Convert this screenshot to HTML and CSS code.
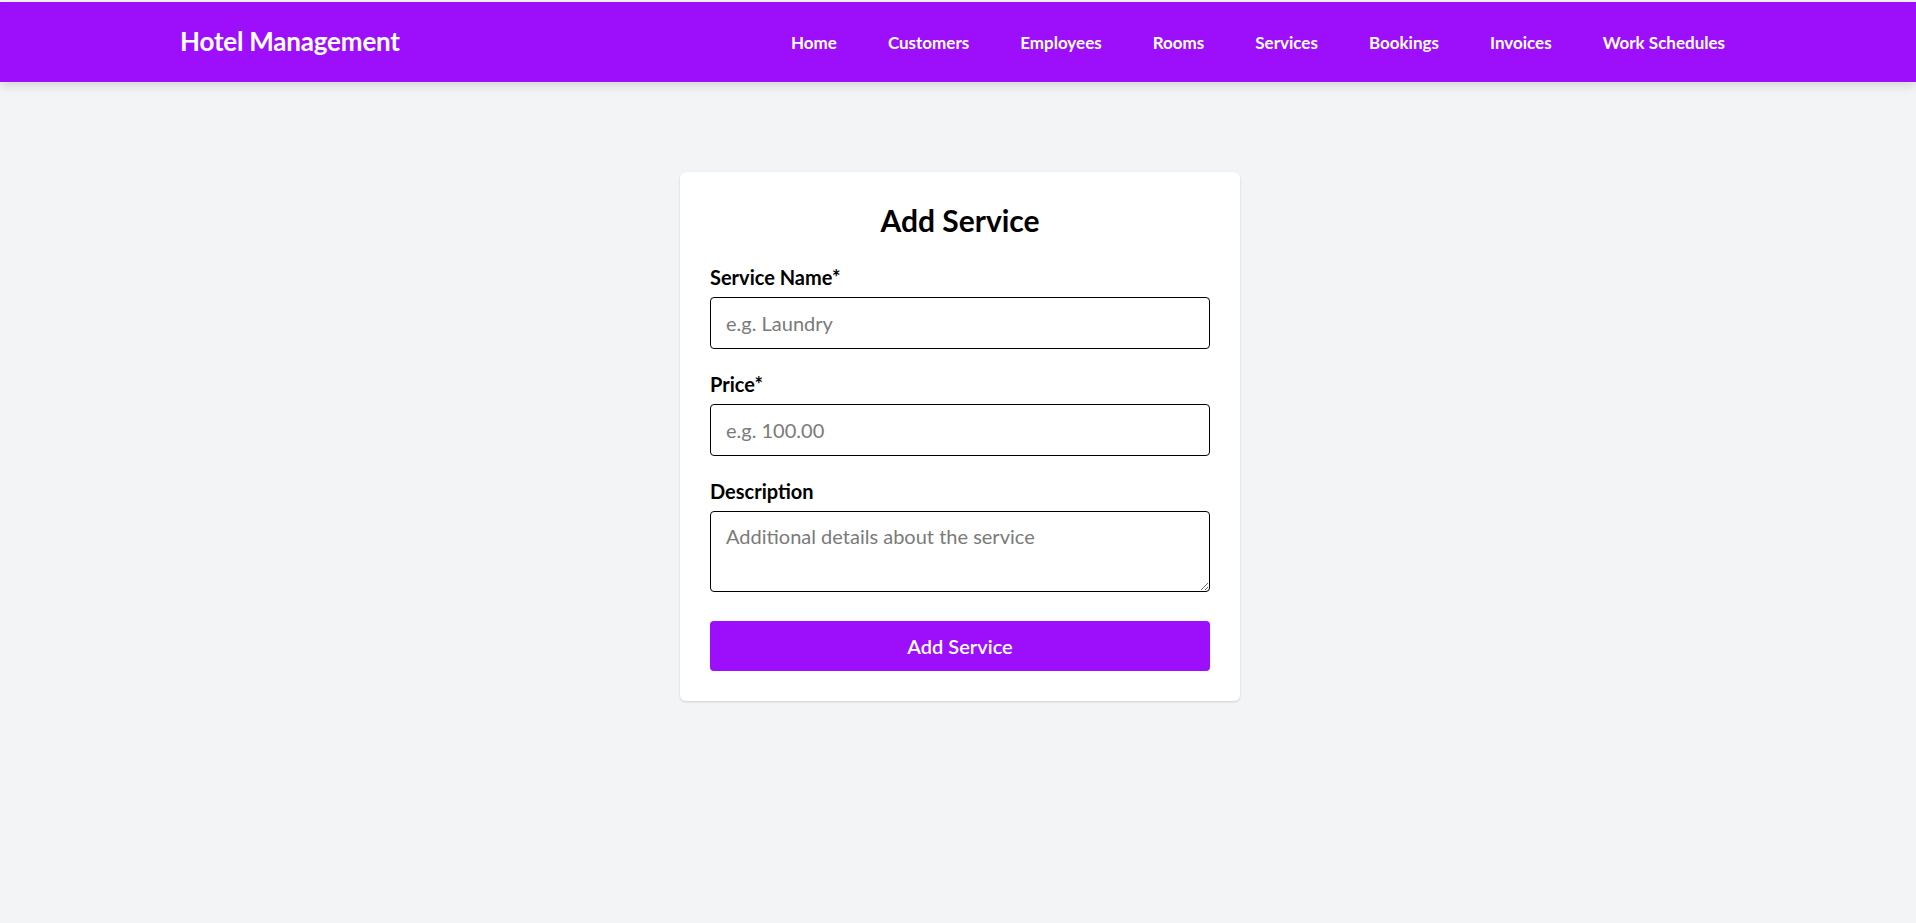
FILE: index.html
```html
<!DOCTYPE html>
<html lang="en">
<head>
<meta charset="utf-8">
<title>Add Service</title>
<link rel="stylesheet" href="styles.css">
</head>
<body>
<div class="page">
  <nav class="navbar">
    <div class="nav-inner">
      <a class="brand" href="#">Hotel Management</a>
      <ul class="nav-links">
        <li><a href="#">Home</a></li>
        <li><a href="#">Customers</a></li>
        <li><a href="#">Employees</a></li>
        <li><a href="#">Rooms</a></li>
        <li><a href="#">Services</a></li>
        <li><a href="#">Bookings</a></li>
        <li><a href="#">Invoices</a></li>
        <li><a href="#">Work Schedules</a></li>
      </ul>
    </div>
  </nav>
  <main class="main">
    <form class="card">
      <h1 class="title">Add Service</h1>
      <div class="field">
        <label class="label" for="name">Service Name*</label>
        <input class="input" id="name" type="text" placeholder="e.g. Laundry">
      </div>
      <div class="field">
        <label class="label" for="price">Price*</label>
        <input class="input" id="price" type="text" placeholder="e.g. 100.00">
      </div>
      <div class="field">
        <label class="label" for="desc">Description</label>
        <textarea class="textarea" id="desc" placeholder="Additional details about the service"></textarea>
      </div>
      <button class="submit" type="button">Add Service</button>
    </form>
  </main>
</div>
</body>
</html>
```
FILE: styles.css
```css
* { box-sizing: border-box; }
html, body { margin: 0; padding: 0; }
body {
  background: #f3f4f6;
  font-family: "Lato", "Noto Sans", sans-serif;
  color: #000;
  min-height: 923px;
}
.page { padding-top: 2px; }
.navbar {
  height: 80px;
  background: #9d0efb;
  box-shadow: 0 4px 10px rgba(0,0,0,0.12);
  position: relative;
}
.nav-inner {
  height: 100%;
  display: flex;
  align-items: center;
  justify-content: space-between;
  padding: 0 191px 0 180px;
}
.brand {
  color: #fff;
  text-decoration: none;
  font-weight: 700;
  font-size: 26px;
  letter-spacing: -0.2px;
  padding-bottom: 2px;
}
.nav-links {
  list-style: none;
  margin: 0;
  padding: 0;
  display: flex;
  gap: 51px;
}
.nav-links a {
  color: #fff;
  text-decoration: none;
  font-weight: 700;
  font-size: 17px;
}
.main {
  display: flex;
  justify-content: center;
  padding-top: 90px;
  padding-left: 4px;
}
.card {
  width: 560px;
  background: #fff;
  border-radius: 6px;
  box-shadow: 0 1px 3px rgba(0,0,0,0.10), 0 1px 2px rgba(0,0,0,0.06);
  padding: 30px;
}
.title {
  margin: 0 0 26px;
  text-align: center;
  font-size: 30px;
  line-height: 36px;
  font-weight: 700;
}
.field { margin-bottom: 22px; }
.label {
  display: block;
  font-size: 20px;
  line-height: 27px;
  font-weight: 700;
  margin-bottom: 6px;
}
.input, .textarea {
  display: block;
  width: 100%;
  border: 1px solid #000;
  border-radius: 4px;
  font-family: inherit;
  font-size: 20px;
  padding: 0 15px;
  color: #000;
  background: #fff;
}
.input { height: 52px; }
.textarea {
  height: 81px;
  padding-top: 12px;
  line-height: 24px;
  resize: vertical;
}
.input::placeholder, .textarea::placeholder { color: #7a7a7a; }
.submit {
  display: block;
  width: 100%;
  height: 50px;
  margin-top: 29px;
  border: none;
  border-radius: 4px;
  background: #9d0efb;
  color: #fff;
  font-family: inherit;
  font-size: 20px;
  font-weight: 600;
}
```
